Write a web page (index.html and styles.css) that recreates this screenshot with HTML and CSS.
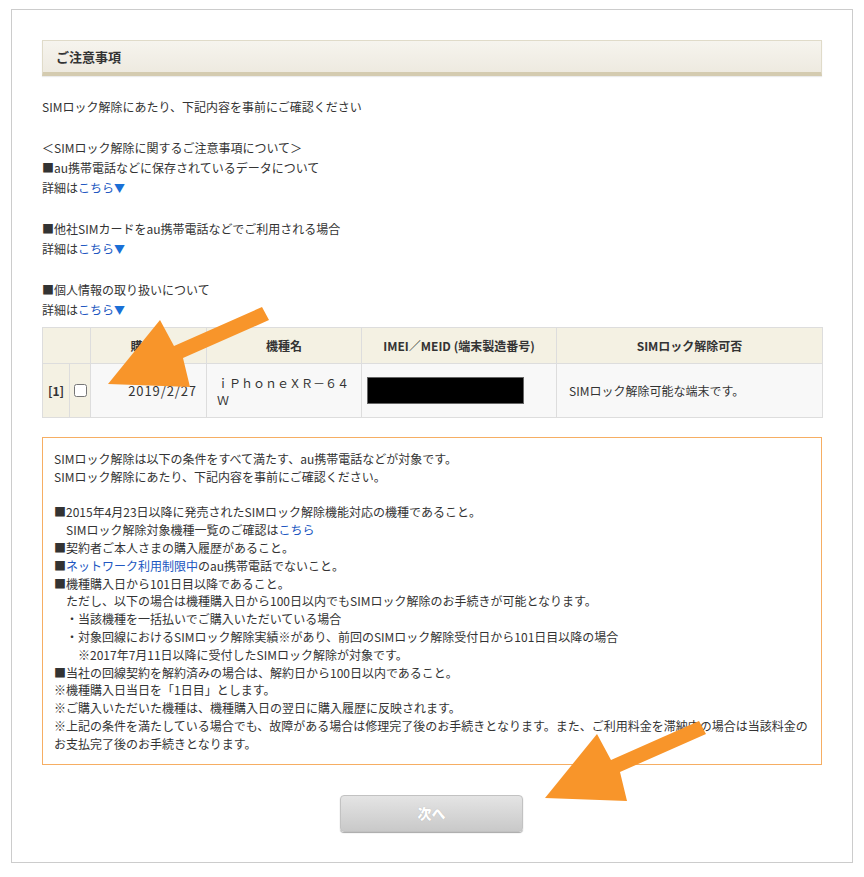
FILE: index.html
```html
<!DOCTYPE html>
<html lang="ja">
<head>
<meta charset="utf-8">
<title>ご注意事項</title>
<link rel="stylesheet" href="styles.css">
</head>
<body>
<div class="page">
  <h2 class="heading">ご注意事項</h2>

  <p class="block">SIMロック解除にあたり、下記内容を事前にご確認ください</p>
  <p class="block">＜SIMロック解除に関するご注意事項について＞<br>■au携帯電話などに保存されているデータについて<br>詳細は<a class="link" href="#">こちら<span class="tri">▼</span></a></p>
  <p class="block">■他社SIMカードをau携帯電話などでご利用される場合<br>詳細は<a class="link" href="#">こちら<span class="tri">▼</span></a></p>
  <p class="block">■個人情報の取り扱いについて<br>詳細は<a class="link" href="#">こちら<span class="tri">▼</span></a></p>

  <table class="devices">
    <colgroup>
      <col class="c-no"><col class="c-chk"><col class="c-date"><col class="c-model"><col class="c-imei"><col class="c-status">
    </colgroup>
    <thead>
      <tr>
        <th colspan="2"></th>
        <th>購入日</th>
        <th>機種名</th>
        <th>IMEI／MEID (端末製造番号)</th>
        <th>SIMロック解除可否</th>
      </tr>
    </thead>
    <tbody>
      <tr>
        <td class="no">[1]</td>
        <td class="chk"><input type="checkbox"></td>
        <td class="date">2019/2/27</td>
        <td class="model">ｉＰｈｏｎｅＸＲ－６４Ｗ</td>
        <td class="imei"><div class="redact"></div></td>
        <td class="status">SIMロック解除可能な端末です。</td>
      </tr>
    </tbody>
  </table>

  <div class="notice">
    <p>SIMロック解除は以下の条件をすべて満たす、au携帯電話などが対象です。</p>
    <p>SIMロック解除にあたり、下記内容を事前にご確認ください。</p>
    <p class="blank">&nbsp;</p>
    <p>■2015年4月23日以降に発売されたSIMロック解除機能対応の機種であること。</p>
    <p class="ind1">SIMロック解除対象機種一覧のご確認は<a class="link" href="#">こちら</a></p>
    <p>■契約者ご本人さまの購入履歴があること。</p>
    <p>■<a class="link" href="#">ネットワーク利用制限中</a>のau携帯電話でないこと。</p>
    <p>■機種購入日から101日目以降であること。</p>
    <p class="ind1">ただし、以下の場合は機種購入日から100日以内でもSIMロック解除のお手続きが可能となります。</p>
    <p class="ind1">・当該機種を一括払いでご購入いただいている場合</p>
    <p class="ind1">・対象回線におけるSIMロック解除実績※があり、前回のSIMロック解除受付日から101日目以降の場合</p>
    <p class="ind2">※2017年7月11日以降に受付したSIMロック解除が対象です。</p>
    <p>■当社の回線契約を解約済みの場合は、解約日から100日以内であること。</p>
    <p>※機種購入日当日を「1日目」とします。</p>
    <p>※ご購入いただいた機種は、機種購入日の翌日に購入履歴に反映されます。</p>
    <p>※上記の条件を満たしている場合でも、故障がある場合は修理完了後のお手続きとなります。また、ご利用料金を滞納中の場合は当該料金のお支払完了後のお手続きとなります。</p>
  </div>

  <div class="actions">
    <button class="next" type="button">次へ</button>
  </div>
</div>

<svg class="arrows" width="864" height="877" viewBox="0 0 864 877" aria-hidden="true">
  <polygon class="arrow" points="262,307 269,320 183,358 190,387 108,384 160,320 174,346"/>
  <polygon class="arrow" points="699,721 706,734 620,772 627,801 545,798 597,734 611,760"/>
</svg>
</body>
</html>
```

FILE: styles.css
```css
* { box-sizing: border-box; }

html, body {
  margin: 0;
  padding: 0;
  background: #fff;
}

body {
  font-family: "Noto Sans CJK JP", "Liberation Sans", sans-serif;
  font-size: 12px;
  color: #333;
  position: relative;
  width: 864px;
  height: 877px;
  overflow: hidden;
}

.page {
  margin: 9px 0 0 11px;
  width: 842px;
  border: 1px solid #cccccc;
  padding: 30px 30px 30px 30px;
}

.heading {
  margin: 0;
  height: 36px;
  padding: 0 0 0 13px;
  display: flex;
  align-items: center;
  font-size: 13px;
  font-weight: bold;
  color: #333;
  background: linear-gradient(#f6f4ee, #eeeae0);
  border: 1px solid #e0dbc9;
  border-bottom: 4px solid #d4cbb0;
  box-shadow: 0 1px 1px rgba(0,0,0,0.08);
}

.block {
  margin: 21px 0 0 0;
  line-height: 20px;
}

.link {
  color: #2157c1;
  text-decoration: none;
}

.tri {
  color: #1a6fd6;
  font-size: 11px;
}

.devices {
  margin-top: 7px;
  width: 780px;
  border-collapse: collapse;
  table-layout: fixed;
}

.c-no { width: 27px; }
.c-chk { width: 21px; }
.c-date { width: 116px; }
.c-model { width: 155px; }
.c-imei { width: 195px; }
.c-status { width: 266px; }

.devices th,
.devices td {
  border: 1px solid #dddddd;
  padding: 0;
}

.devices th {
  height: 36px;
  background: #f4f1e3;
  font-weight: bold;
  font-size: 12px;
  text-align: center;
  color: #333;
}

.devices td {
  height: 54px;
  background: #f8f8f8;
  vertical-align: middle;
  font-size: 12px;
}

.devices td.no {
  background: #f4f1e3;
  font-weight: bold;
  text-align: center;
}

.devices td.chk {
  background: #f4f1e3;
  text-align: center;
}

.chk input {
  margin: 3px 0 0 0;
  width: 13px;
  height: 13px;
}

.devices td.date {
  text-align: right;
  padding-right: 9px;
  font-size: 13px;
  letter-spacing: 0.9px;
}

.devices td.model {
  padding: 0 10px 0 10px;
  line-height: 17px;
}

.devices td.imei {
  padding: 0 0 0 5px;
}

.redact {
  width: 157px;
  height: 27px;
  background: #000;
  border: 1px solid #666;
}

.devices td.status {
  padding-left: 12px;
}

.notice {
  margin-top: 19px;
  border: 1px solid #f6ae63;
  padding: 12px 11px 11px 11px;
  line-height: 17.8px;
}

.notice p {
  margin: 0;
}

.notice .ind1 { padding-left: 12px; }
.notice .ind2 { padding-left: 24px; }

.actions {
  display: flex;
  justify-content: center;
  margin-top: 30px;
}

.next {
  width: 183px;
  height: 37px;
  border: 1px solid #c2c2c2;
  border-radius: 4px;
  background: linear-gradient(#e4e4e4, #c9c9c9);
  box-shadow: 0 1px 1px rgba(0,0,0,0.35);
  color: #fff;
  font-family: "Noto Sans CJK JP", sans-serif;
  font-weight: 900;
  font-size: 14px;
  text-shadow: 0 0 1px rgba(0,0,0,0.2);
  padding: 0;
  margin-left: -1px;
}

.arrows {
  position: absolute;
  top: 0;
  left: 0;
  pointer-events: none;
}

.arrow {
  fill: #f8952a;
}
```
